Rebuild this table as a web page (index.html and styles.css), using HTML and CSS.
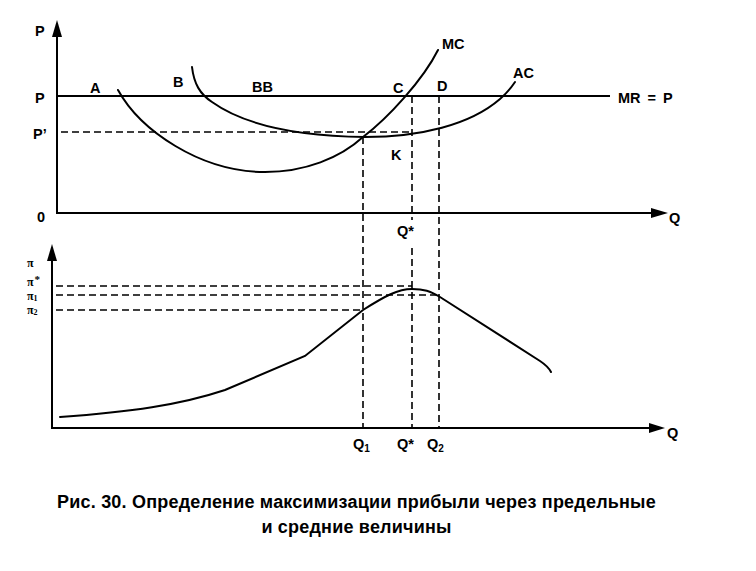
FILE: index.html
```html
<!DOCTYPE html>
<html lang="ru">
<head>
<meta charset="utf-8">
<title>Рис. 30</title>
<link rel="stylesheet" href="styles.css">
</head>
<body>
<figure class="figure">
  <svg class="chart" width="756" height="472" viewBox="0 0 756 472" xmlns="http://www.w3.org/2000/svg">
    <!-- upper chart axes -->
    <line class="axis" x1="57" y1="30" x2="57" y2="214"/>
    <polygon points="57,20 52,37 62,37"/>
    <line class="axis" x1="56" y1="213" x2="656" y2="213"/>
    <polygon points="668,213 651,208 651,218"/>
    <!-- MR = P line -->
    <line class="axis" x1="57" y1="96" x2="610" y2="96"/>
    <!-- P' dashed -->
    <line class="dash" x1="61" y1="132" x2="412" y2="132"/>
    <!-- MC curve -->
    <path class="curve" d="M118,90 C140,130 200,172 265,172 C305,172 340,158 363,137 C388,118 423,80 438,50"/>
    <!-- AC curve -->
    <path class="curve" d="M192,67 C194,84 200,94 212,102 C240,122 290,136 365,137 C420,137 470,125 500,99 C507,93 511,88 515,82"/>
    <!-- vertical dashed -->
    <line class="dash" x1="363" y1="137" x2="363" y2="428"/>
    <line class="dash" x1="412" y1="96" x2="412" y2="220"/>
    <line class="dash" x1="412" y1="248" x2="412" y2="428"/>
    <line class="dash" x1="439" y1="96" x2="439" y2="428"/>

    <!-- upper labels -->
    <text class="lbl" x="35" y="36">P</text>
    <text class="lbl" x="35" y="103">P</text>
    <text class="lbl" x="33" y="139">P’</text>
    <text class="lbl" x="37" y="222">0</text>
    <text class="lbl" x="90" y="93">A</text>
    <text class="lbl" x="173" y="87">B</text>
    <text class="lbl" x="252" y="92">BB</text>
    <text class="lbl" x="393" y="93">C</text>
    <text class="lbl" x="437" y="91">D</text>
    <text class="lbl" x="442" y="49">MC</text>
    <text class="lbl" x="513" y="78">AC</text>
    <text class="lbl wide" x="618" y="103">MR = P</text>
    <text class="lbl" x="391" y="160">K</text>
    <text class="lbl" x="397" y="236">Q*</text>
    <text class="lbl" x="669" y="223">Q</text>

    <!-- lower chart axes -->
    <line class="axis" x1="52" y1="255" x2="52" y2="429"/>
    <polygon points="52,244 47,261 57,261"/>
    <line class="axis" x1="51" y1="428" x2="652" y2="428"/>
    <polygon points="665,428 649,423 649,433"/>
    <!-- profit dashed -->
    <line class="dash" x1="56" y1="286" x2="412" y2="286"/>
    <line class="dash" x1="56" y1="295" x2="439" y2="295"/>
    <line class="dash" x1="56" y1="310" x2="363" y2="310"/>
    <!-- profit curve -->
    <path class="curve" d="M60,417 C130,412 180,405 225,390 L305,356 L363,310 C385,296 398,289 412,289 C424,289 430,291 440,297 L540,361 C546,365 549,368 551,372"/>

    <!-- lower labels -->
    <text class="pi" x="27" y="267">π</text>
    <text class="pi" x="27" y="286">π<tspan class="star" dx="1" dy="-3">*</tspan></text>
    <text class="pi" x="27" y="299.5">π<tspan class="sub" dy="1">1</tspan></text>
    <text class="pi" x="27" y="313.5">π<tspan class="sub" dy="1">2</tspan></text>
    <text class="lbl" x="353" y="449">Q<tspan class="qsub" dy="3">1</tspan></text>
    <text class="lbl" x="397" y="449">Q*</text>
    <text class="lbl" x="427" y="449">Q<tspan class="qsub" dy="3">2</tspan></text>
    <text class="lbl" x="667" y="438">Q</text>
  </svg>
  <figcaption class="caption">
    <p class="caption-line">Рис. 30. Определение максимизации прибыли через предельные</p>
    <p class="caption-line">и средние величины</p>
  </figcaption>
</figure>
</body>
</html>
```

FILE: styles.css
```css
html, body {
  margin: 0;
  padding: 0;
  background: #ffffff;
}

.figure {
  margin: 0;
  width: 756px;
  height: 571px;
  display: flex;
  flex-direction: column;
}

.chart {
  display: block;
  flex: none;
}

.chart polygon {
  fill: #000;
}

.axis {
  stroke: #000;
  stroke-width: 2;
}

.dash {
  stroke: #000;
  stroke-width: 1.6;
  stroke-dasharray: 7 4;
}

.curve {
  fill: none;
  stroke: #000;
  stroke-width: 2;
  stroke-linecap: round;
}

.lbl {
  font-family: "Liberation Sans", Arial, sans-serif;
  font-weight: bold;
  font-size: 14.5px;
  fill: #000;
}

.wide {
  word-spacing: 3px;
}

.pi {
  font-family: "Liberation Serif", "Times New Roman", serif;
  font-weight: bold;
  font-size: 12px;
  fill: #000;
}

.sub {
  font-size: 8px;
}

.star {
  font-size: 11px;
}

.qsub {
  font-size: 10px;
}

.caption {
  margin: 0;
  padding-top: 18px;
  padding-right: 43px;
  font-family: "Liberation Sans", Arial, sans-serif;
  font-weight: bold;
  font-size: 18px;
  letter-spacing: 0.2px;
  line-height: 25px;
  color: #000;
  text-align: center;
}

.caption-line {
  margin: 0;
}
```
